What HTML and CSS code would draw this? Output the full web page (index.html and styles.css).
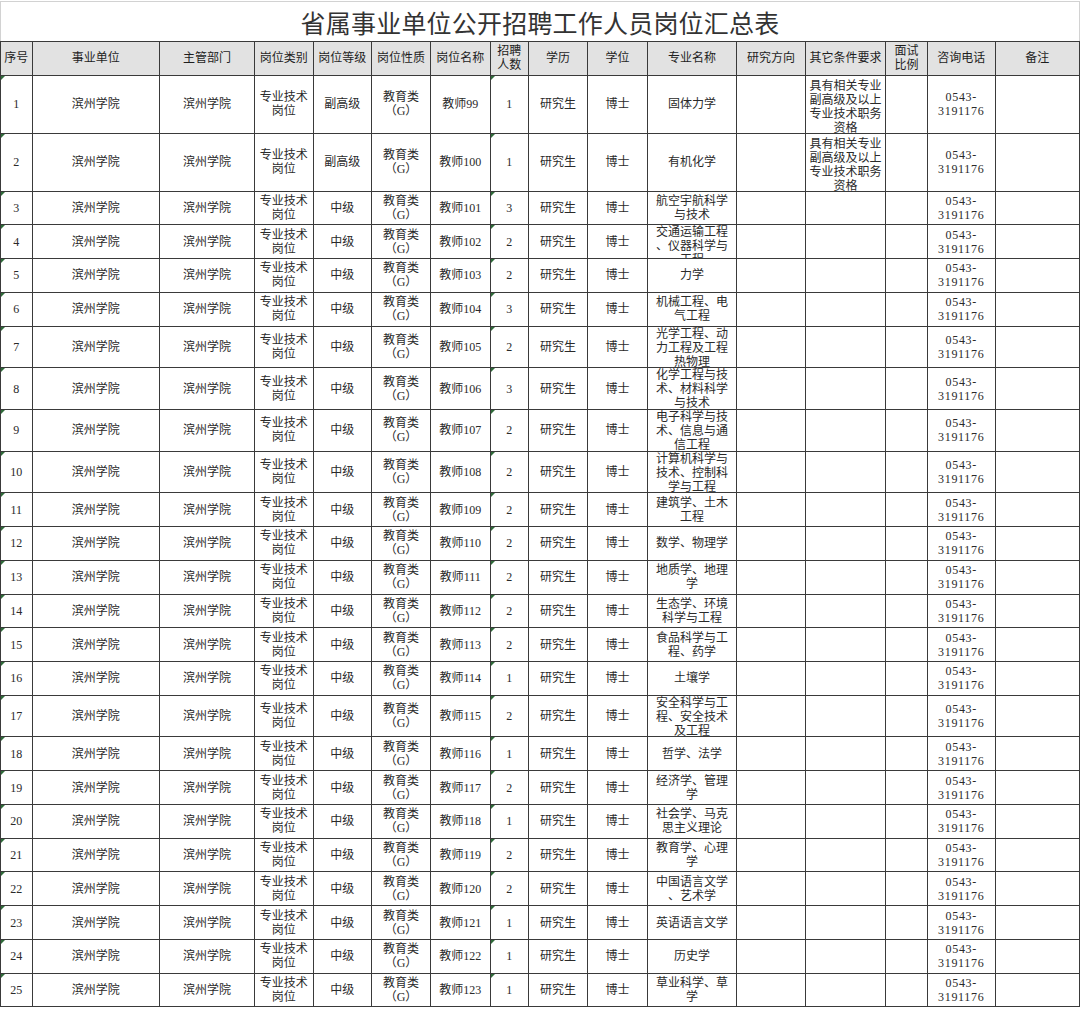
FILE: index.html
```html
<!DOCTYPE html>
<html lang="zh-CN">
<head>
<meta charset="utf-8">
<title>省属事业单位公开招聘工作人员岗位汇总表</title>
<link rel="stylesheet" href="styles.css">
</head>
<body>
<div class="sheet">
  <div class="title">省属事业单位公开招聘工作人员岗位汇总表</div>
  <div class="grid">
    <div class="h">序号</div><div class="h">事业单位</div><div class="h">主管部门</div><div class="h">岗位类别</div><div class="h">岗位等级</div><div class="h">岗位性质</div><div class="h">岗位名称</div><div class="h">招聘<br>人数</div><div class="h">学历</div><div class="h">学位</div><div class="h">专业名称</div><div class="h">研究方向</div><div class="h">其它条件要求</div><div class="h">面试<br>比例</div><div class="h">咨询电话</div><div class="h">备注</div>

    <div class="n">1</div><div>滨州学院</div><div>滨州学院</div><div>专业技术<br>岗位</div><div>副高级</div><div>教育类<br>（G）</div><div>教师99</div><div class="n">1</div><div>研究生</div><div>博士</div><div>固体力学</div><div></div><div class="x">具有相关专业<br>副高级及以上<br>专业技术职务<br>资格</div><div></div><div class="p">0543-<br>3191176</div><div></div>

    <div class="n">2</div><div>滨州学院</div><div>滨州学院</div><div>专业技术<br>岗位</div><div>副高级</div><div>教育类<br>（G）</div><div>教师100</div><div class="n">1</div><div>研究生</div><div>博士</div><div>有机化学</div><div></div><div class="x">具有相关专业<br>副高级及以上<br>专业技术职务<br>资格</div><div></div><div class="p">0543-<br>3191176</div><div></div>

    <div class="n">3</div><div>滨州学院</div><div>滨州学院</div><div>专业技术<br>岗位</div><div>中级</div><div>教育类<br>（G）</div><div>教师101</div><div class="n">3</div><div>研究生</div><div>博士</div><div>航空宇航科学<br>与技术</div><div></div><div></div><div></div><div class="p">0543-<br>3191176</div><div></div>

    <div class="n">4</div><div>滨州学院</div><div>滨州学院</div><div>专业技术<br>岗位</div><div>中级</div><div>教育类<br>（G）</div><div>教师102</div><div class="n">2</div><div>研究生</div><div>博士</div><div>交通运输工程<br>、仪器科学与<br>工程</div><div></div><div></div><div></div><div class="p">0543-<br>3191176</div><div></div>

    <div class="n">5</div><div>滨州学院</div><div>滨州学院</div><div>专业技术<br>岗位</div><div>中级</div><div>教育类<br>（G）</div><div>教师103</div><div class="n">2</div><div>研究生</div><div>博士</div><div>力学</div><div></div><div></div><div></div><div class="p">0543-<br>3191176</div><div></div>

    <div class="n">6</div><div>滨州学院</div><div>滨州学院</div><div>专业技术<br>岗位</div><div>中级</div><div>教育类<br>（G）</div><div>教师104</div><div class="n">3</div><div>研究生</div><div>博士</div><div>机械工程、电<br>气工程</div><div></div><div></div><div></div><div class="p">0543-<br>3191176</div><div></div>

    <div class="n">7</div><div>滨州学院</div><div>滨州学院</div><div>专业技术<br>岗位</div><div>中级</div><div>教育类<br>（G）</div><div>教师105</div><div class="n">2</div><div>研究生</div><div>博士</div><div>光学工程、动<br>力工程及工程<br>热物理</div><div></div><div></div><div></div><div class="p">0543-<br>3191176</div><div></div>

    <div class="n">8</div><div>滨州学院</div><div>滨州学院</div><div>专业技术<br>岗位</div><div>中级</div><div>教育类<br>（G）</div><div>教师106</div><div class="n">3</div><div>研究生</div><div>博士</div><div>化学工程与技<br>术、材料科学<br>与技术</div><div></div><div></div><div></div><div class="p">0543-<br>3191176</div><div></div>

    <div class="n">9</div><div>滨州学院</div><div>滨州学院</div><div>专业技术<br>岗位</div><div>中级</div><div>教育类<br>（G）</div><div>教师107</div><div class="n">2</div><div>研究生</div><div>博士</div><div>电子科学与技<br>术、信息与通<br>信工程</div><div></div><div></div><div></div><div class="p">0543-<br>3191176</div><div></div>

    <div class="n">10</div><div>滨州学院</div><div>滨州学院</div><div>专业技术<br>岗位</div><div>中级</div><div>教育类<br>（G）</div><div>教师108</div><div class="n">2</div><div>研究生</div><div>博士</div><div>计算机科学与<br>技术、控制科<br>学与工程</div><div></div><div></div><div></div><div class="p">0543-<br>3191176</div><div></div>

    <div class="n">11</div><div>滨州学院</div><div>滨州学院</div><div>专业技术<br>岗位</div><div>中级</div><div>教育类<br>（G）</div><div>教师109</div><div class="n">2</div><div>研究生</div><div>博士</div><div>建筑学、土木<br>工程</div><div></div><div></div><div></div><div class="p">0543-<br>3191176</div><div></div>

    <div class="n">12</div><div>滨州学院</div><div>滨州学院</div><div>专业技术<br>岗位</div><div>中级</div><div>教育类<br>（G）</div><div>教师110</div><div class="n">2</div><div>研究生</div><div>博士</div><div>数学、物理学</div><div></div><div></div><div></div><div class="p">0543-<br>3191176</div><div></div>

    <div class="n">13</div><div>滨州学院</div><div>滨州学院</div><div>专业技术<br>岗位</div><div>中级</div><div>教育类<br>（G）</div><div>教师111</div><div class="n">2</div><div>研究生</div><div>博士</div><div>地质学、地理<br>学</div><div></div><div></div><div></div><div class="p">0543-<br>3191176</div><div></div>

    <div class="n">14</div><div>滨州学院</div><div>滨州学院</div><div>专业技术<br>岗位</div><div>中级</div><div>教育类<br>（G）</div><div>教师112</div><div class="n">2</div><div>研究生</div><div>博士</div><div>生态学、环境<br>科学与工程</div><div></div><div></div><div></div><div class="p">0543-<br>3191176</div><div></div>

    <div class="n">15</div><div>滨州学院</div><div>滨州学院</div><div>专业技术<br>岗位</div><div>中级</div><div>教育类<br>（G）</div><div>教师113</div><div class="n">2</div><div>研究生</div><div>博士</div><div>食品科学与工<br>程、药学</div><div></div><div></div><div></div><div class="p">0543-<br>3191176</div><div></div>

    <div class="n">16</div><div>滨州学院</div><div>滨州学院</div><div>专业技术<br>岗位</div><div>中级</div><div>教育类<br>（G）</div><div>教师114</div><div class="n">1</div><div>研究生</div><div>博士</div><div>土壤学</div><div></div><div></div><div></div><div class="p">0543-<br>3191176</div><div></div>

    <div class="n">17</div><div>滨州学院</div><div>滨州学院</div><div>专业技术<br>岗位</div><div>中级</div><div>教育类<br>（G）</div><div>教师115</div><div class="n">2</div><div>研究生</div><div>博士</div><div>安全科学与工<br>程、安全技术<br>及工程</div><div></div><div></div><div></div><div class="p">0543-<br>3191176</div><div></div>

    <div class="n">18</div><div>滨州学院</div><div>滨州学院</div><div>专业技术<br>岗位</div><div>中级</div><div>教育类<br>（G）</div><div>教师116</div><div class="n">1</div><div>研究生</div><div>博士</div><div>哲学、法学</div><div></div><div></div><div></div><div class="p">0543-<br>3191176</div><div></div>

    <div class="n">19</div><div>滨州学院</div><div>滨州学院</div><div>专业技术<br>岗位</div><div>中级</div><div>教育类<br>（G）</div><div>教师117</div><div class="n">2</div><div>研究生</div><div>博士</div><div>经济学、管理<br>学</div><div></div><div></div><div></div><div class="p">0543-<br>3191176</div><div></div>

    <div class="n">20</div><div>滨州学院</div><div>滨州学院</div><div>专业技术<br>岗位</div><div>中级</div><div>教育类<br>（G）</div><div>教师118</div><div class="n">1</div><div>研究生</div><div>博士</div><div>社会学、马克<br>思主义理论</div><div></div><div></div><div></div><div class="p">0543-<br>3191176</div><div></div>

    <div class="n">21</div><div>滨州学院</div><div>滨州学院</div><div>专业技术<br>岗位</div><div>中级</div><div>教育类<br>（G）</div><div>教师119</div><div class="n">2</div><div>研究生</div><div>博士</div><div>教育学、心理<br>学</div><div></div><div></div><div></div><div class="p">0543-<br>3191176</div><div></div>

    <div class="n">22</div><div>滨州学院</div><div>滨州学院</div><div>专业技术<br>岗位</div><div>中级</div><div>教育类<br>（G）</div><div>教师120</div><div class="n">2</div><div>研究生</div><div>博士</div><div>中国语言文学<br>、艺术学</div><div></div><div></div><div></div><div class="p">0543-<br>3191176</div><div></div>

    <div class="n">23</div><div>滨州学院</div><div>滨州学院</div><div>专业技术<br>岗位</div><div>中级</div><div>教育类<br>（G）</div><div>教师121</div><div class="n">1</div><div>研究生</div><div>博士</div><div>英语语言文学</div><div></div><div></div><div></div><div class="p">0543-<br>3191176</div><div></div>

    <div class="n">24</div><div>滨州学院</div><div>滨州学院</div><div>专业技术<br>岗位</div><div>中级</div><div>教育类<br>（G）</div><div>教师122</div><div class="n">1</div><div>研究生</div><div>博士</div><div>历史学</div><div></div><div></div><div></div><div class="p">0543-<br>3191176</div><div></div>

    <div class="n">25</div><div>滨州学院</div><div>滨州学院</div><div>专业技术<br>岗位</div><div>中级</div><div>教育类<br>（G）</div><div>教师123</div><div class="n">1</div><div>研究生</div><div>博士</div><div>草业科学、草<br>学</div><div></div><div></div><div></div><div class="p">0543-<br>3191176</div><div></div>
  </div>
</div>
</body>
</html>
```
FILE: styles.css
```css
html, body {
  margin: 0;
  padding: 0;
  background: #ffffff;
}

body {
  font-family: "Liberation Serif", "Noto Sans CJK SC", serif;
  color: #2a2a2a;
  width: 1080px;
  height: 1009px;
  overflow: hidden;
}

.sheet {
  width: 1080px;
}

.title {
  box-sizing: border-box;
  width: 1080px;
  height: 40px;
  margin-top: 1px;
  border-top: 1px solid #d2d2d2;
  border-left: 1px solid #d2d2d2;
  border-right: 1px solid #d2d2d2;
  display: flex;
  align-items: center;
  justify-content: center;
  padding-top: 1px;
  font-family: "Noto Sans CJK SC", sans-serif;
  font-size: 25px;
  letter-spacing: 0.2px;
  color: #333333;
}

.grid {
  box-sizing: border-box;
  width: 1080px;
  display: grid;
  grid-template-columns: 31.5px 127.5px 95px 58.5px 58.5px 59px 59.5px 38.5px 59px 60px 89px 69px 80px 42px 67.5px 84.5px;
  grid-template-rows: 33.5px 58px 58px repeat(4, 33.75px) repeat(4, 41.7px) repeat(6, 33.75px) 41.7px repeat(8, 33.75px);
  border-top: 1px solid #3a3a3a;
  border-left: 1px solid #3a3a3a;
}

.grid > div {
  position: relative;
  box-sizing: border-box;
  border-right: 1px solid #3a3a3a;
  border-bottom: 1px solid #3a3a3a;
  overflow: hidden;
  display: flex;
  flex-direction: column;
  justify-content: center;
  justify-content: safe center;
  align-items: center;
  text-align: center;
  white-space: nowrap;
  font-size: 12px;
  line-height: 14px;
}

.grid > div.h {
  background: #e2e2e2;
  color: #1e1e1e;
  line-height: 14.5px;
}

.grid > div.x {
  padding-top: 3px;
  justify-content: flex-start;
}

.grid > div.p {
  letter-spacing: 0.7px;
}

.grid > div.n::before {
  content: "";
  position: absolute;
  left: 0;
  top: 0;
  width: 0;
  height: 0;
  border-top: 4px solid #2f6b3a;
  border-right: 4px solid transparent;
}
```
